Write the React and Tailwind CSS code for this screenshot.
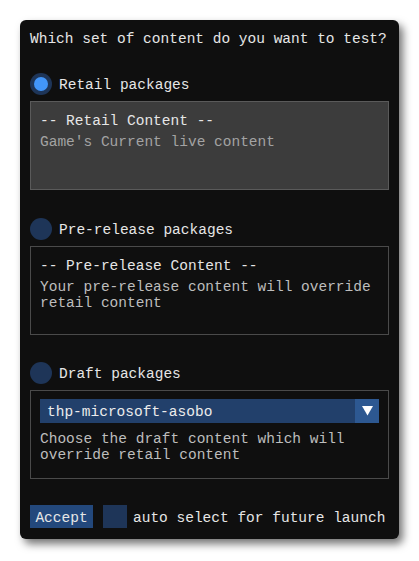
export default function App() {
  const mono = { fontFamily: '"Liberation Mono", "DejaVu Sans Mono", monospace' };

  const Radio = ({ on }) => (
    <div className="w-[22px] h-[22px] rounded-full bg-[#1e3558] flex items-center justify-center shrink-0">
      {on && <div className="w-[14px] h-[14px] rounded-full bg-[#4296fa]" />}
    </div>
  );

  return (
    <div className="min-h-[561px] bg-white pt-[20px] pl-[20px]" style={mono}>
      <div className="w-[379px] h-[519px] rounded-[6px] bg-[#0f0f0f] shadow-[4px_5px_9px_rgba(0,0,0,0.55)] px-[10px] pt-[11px] pb-[10px] flex flex-col text-[14.5px] leading-[16px] text-[#e6e6e6]">
        <div className="h-[16px] whitespace-nowrap">Which set of content do you want to test?</div>

        {/* Retail */}
        <div className="mt-[26px] h-[22px] flex items-center gap-[7px]">
          <Radio on />
          <span className="pt-[2px]">Retail packages</span>
        </div>
        <div className="mt-[6px] h-[89px] border border-[#5a5a5a] bg-[#3c3c3c] px-[9px] pt-[11px]">
          <div>-- Retail Content --</div>
          <div className="mt-[5px] text-[#a3a3a3]">Game's Current live content</div>
        </div>

        {/* Pre-release */}
        <div className="mt-[28px] h-[22px] flex items-center gap-[7px]">
          <Radio />
          <span className="pt-[2px]">Pre-release packages</span>
        </div>
        <div className="mt-[6px] h-[89px] border border-[#4a4a4a] px-[9px] pt-[11px]">
          <div>-- Pre-release Content --</div>
          <div className="mt-[5px] text-[#bdbdbd]">
            <div>Your pre-release content will override</div>
            <div>retail content</div>
          </div>
        </div>

        {/* Draft */}
        <div className="mt-[27px] h-[22px] flex items-center gap-[7px]">
          <Radio />
          <span className="pt-[2px]">Draft packages</span>
        </div>
        <div className="mt-[6px] h-[89px] border border-[#4a4a4a] px-[9px] pt-[8px]">
          <div className="h-[24px] flex bg-[#22406b]">
            <div className="flex-1 pl-[7px] pt-[2px] flex items-center text-[#ececec]">thp-microsoft-asobo</div>
            <div className="w-[24px] bg-[#2d5891] flex items-center justify-center">
              <svg width="11" height="10" viewBox="0 0 11 10">
                <polygon points="0,0 11,0 5.5,9.5" fill="#ffffff" />
              </svg>
            </div>
          </div>
          <div className="mt-[8px] text-[#bdbdbd]">
            <div>Choose the draft content which will</div>
            <div>override retail content</div>
          </div>
        </div>

        {/* Footer */}
        <div className="mt-[26px] h-[23px] flex items-center">
          <div className="h-[23px] w-[63px] bg-[#23487c] flex items-center justify-center pt-[2px] text-[#e6e6e6]">Accept</div>
          <div className="ml-[10px] h-[23px] w-[24px] bg-[#1e3558]" />
          <span className="ml-[6px] pt-[2px] whitespace-nowrap">auto select for future launch</span>
        </div>
      </div>
    </div>
  );
}
